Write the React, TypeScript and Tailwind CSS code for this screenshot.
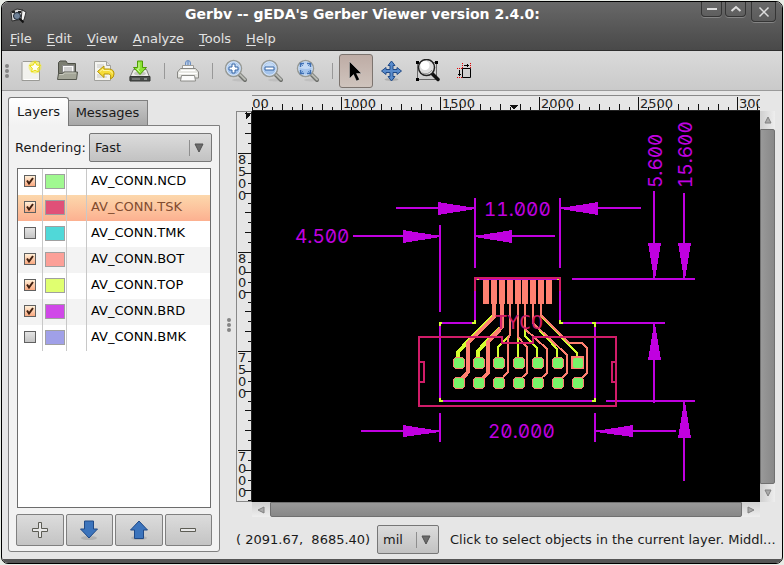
import { useState } from 'react';
import type { ReactNode } from 'react';

type Layer = { name: string; color: string; visible: boolean };

const initialLayers: Layer[] = [
  { name: 'AV_CONN.NCD', color: '#a0f890', visible: true },
  { name: 'AV_CONN.TSK', color: '#e05078', visible: true },
  { name: 'AV_CONN.TMK', color: '#50d8d8', visible: false },
  { name: 'AV_CONN.BOT', color: '#fca098', visible: true },
  { name: 'AV_CONN.TOP', color: '#e0ff70', visible: true },
  { name: 'AV_CONN.BRD', color: '#d048e8', visible: true },
  { name: 'AV_CONN.BMK', color: '#a0a0e8', visible: false },
];

const menus = ['File', 'Edit', 'View', 'Analyze', 'Tools', 'Help'];

function Icon({ children }: { children: ReactNode }) {
  return (
    <svg width="24" height="24" viewBox="0 0 24 24" fill="none" aria-hidden="true">
      {children}
    </svg>
  );
}

function NewIcon() {
  return (
    <Icon>
      <path d="M3 2.5h16.500v19h-17.500v-18z" fill="#f2f2ee" stroke="#9a9a96" />
      <path d="M4 20.500h14.500" stroke="#fff" />
      <circle cx="15" cy="8" r="6.500" fill="#f4ec30" opacity=".55" />
      <path d="M15 2.500l1.700 3.500 3.800.500-2.800 2.700.700 3.800-3.400-1.800-3.400 1.800.700-3.800-2.800-2.700 3.800-.500z" fill="#fffef0" stroke="#eadc10" />
    </Icon>
  );
}

function OpenIcon() {
  return (
    <Icon>
      <path d="M2.500 20V3.500L4 2h6l1.500 2.500h8V20z" fill="#7c7e72" stroke="#4c4e46" />
      <path d="M6.500 6.500h11.500v11h-11.500z" fill="#fafafa" stroke="#888" />
      <path d="M8 9h8M8 11h8M8 13h8" stroke="#a8a8a8" />
      <path d="M1.500 20.500L2.500 14.500h4l1-1.500h14l-1 7.500z" fill="#a4a698" stroke="#55574e" />
      <path d="M3.500 15.500h4l1-1.500h11.500" stroke="#c8cabe" />
    </Icon>
  );
}

function RevertIcon() {
  return (
    <Icon>
      <path d="M2.500 2.500h12l4 4v15h-16z" fill="#f4f4f0" stroke="#a0a09c" />
      <path d="M5 6h7M5 8h6M5 18h10M5 16h4" stroke="#c8c8c4" />
      <path d="M14.500 2.500v4h4" fill="#ddd" stroke="#a0a09c" />
      <path d="M5.500 12.500L12 7v3h5.500q4.500.500 4.500 5 0 3.500-3.500 5 1-5-2-5H12v3.500z" fill="#f6dc38" stroke="#b49408" />
      <path d="M8 12.500L11 10v1.500h6q3 .500 3.500 3" stroke="#fff59a" />
    </Icon>
  );
}

function SaveIcon() {
  return (
    <Icon>
      <path d="M5.500 10.500h13l3 7.500v3.500h-19.500V18z" fill="#ecece8" stroke="#7c7c78" />
      <path d="M2 17.500h20v4.500H2z" fill="#4c504e" stroke="#353735" />
      <path d="M4 20h8" stroke="#999" />
      <path d="M16 20h3" stroke="#ccc" />
      <ellipse cx="12" cy="14.500" rx="6" ry="2" fill="#c8c8c4" />
      <path d="M9.500 2h5v6.500h4L12 15.500 5.500 8.500h4z" fill="#8ae234" stroke="#4e9a06" />
      <path d="M11 3.500v6.500h-2l3 3.200" stroke="#d0f8a0" />
    </Icon>
  );
}

function PrintIcon() {
  return (
    <Icon>
      <path d="M9.500 8V4q0-2.500 2.500-2.500T14.500 4v4z" fill="#b8cce8" stroke="#6c8ec0" />
      <path d="M12 2v4" stroke="#5c82b8" />
      <path d="M6.500 11V6.500h11V11" fill="#f8f8f8" stroke="#9c9c98" />
      <path d="M1.500 19V13l3-3.500h15l3 3.500v6z" fill="#e8e8e4" stroke="#888884" />
      <path d="M5 11.500h14M3 14.500h18" stroke="#fff" />
      <path d="M5.500 16.500h13l1 5.500h-15z" fill="#fbfbfb" stroke="#8c8c88" />
    </Icon>
  );
}

function LensIcon({ children }: { children: ReactNode }) {
  return (
    <Icon>
      <ellipse cx="15" cy="21" rx="7" ry="1.500" fill="#aaa" opacity=".4" />
      <path d="M15.500 15.500l5.500 5.500" stroke="#6e706c" strokeWidth="4" strokeLinecap="round" />
      <path d="M16 15.500l5 5" stroke="#b8bab4" strokeWidth="2" strokeLinecap="round" />
      <circle cx="9.500" cy="9.500" r="8" fill="#a4c4ec" stroke="#989a94" strokeWidth="1.500" />
      <circle cx="9.500" cy="9.500" r="6.700" stroke="#dce8f8" />
      <path d="M4 9q1-5 5.500-5T15 9q-5 2-11 0z" fill="#c4daf4" />
      {children}
    </Icon>
  );
}

function ZoomInIcon() {
  return (
    <LensIcon>
      <path d="M8 5h3v3h3v3h-3v3H8v-3H5V8h3z" fill="#fff" stroke="#3465a4" />
    </LensIcon>
  );
}

function ZoomOutIcon() {
  return (
    <LensIcon>
      <path d="M5 8h9v3H5z" fill="#fff" stroke="#3465a4" />
    </LensIcon>
  );
}

function ZoomFitIcon() {
  return (
    <LensIcon>
      <path
        d="M4.500 8V4.500H8M11 4.500h3.500V8M14.500 11v3.500H11M8 14.500H4.500V11"
        stroke="#3f70b4"
        strokeWidth="1.500"
      />
      <path d="M5 5l2 2M14 5l-2 2M14 14l-2-2M5 14l2-2" stroke="#5a88c4" />
    </LensIcon>
  );
}

function PointerIcon() {
  return (
    <Icon>
      <path d="M5.500 2.500v17l4-4 3 6.500 3-1.500-3-6h5z" fill="#000" stroke="#fff" strokeOpacity=".35" />
    </Icon>
  );
}

function MoveIcon() {
  return (
    <Icon>
      <ellipse cx="11.500" cy="20.500" rx="7" ry="1.500" fill="#999" opacity=".6" />
      <path
        d="M11.500 2L15 6.500h-2v4h4v-2l4.500 3.500-4.500 3.500v-2h-4v4h2L11.500 22 8 17.500h2v-4H6v2L1.500 12 6 8.500v2h4v-4H8z"
        fill="#5a8ccc"
        stroke="#204a87"
      />
    </Icon>
  );
}

function ZoomAreaIcon() {
  return (
    <Icon>
      <path d="M1.500 3.500h19v17h-19z" stroke="#000" strokeDasharray="1 1" />
      <path d="M0 2h3v3H0zM19 2h3v3h-3zM0 19h3v3H0z" fill="#000" />
      <path d="M16 14.500l6 6" stroke="#111" strokeWidth="3.500" strokeLinecap="round" />
      <circle cx="10.500" cy="8.500" r="8" fill="#dedede" stroke="#222" strokeWidth="1.500" />
      <circle cx="9" cy="6.500" r="4.500" fill="#fff" />
      <path d="M6 14q6 2.500 10-3" stroke="#999" />
    </Icon>
  );
}

function MeasureIcon() {
  return (
    <Icon>
      <path d="M10.500 9.500h8v9h-8z" stroke="#000" />
      <path d="M10.500 4v5M18.500 4v5M5 9.500h5M5 18.500h5" stroke="#e00000" strokeDasharray="1 1" />
      <path d="M12 6.500h5M15.500 5v3M7.500 11v6M6 15.500h3" stroke="#000" />
    </Icon>
  );
}

function ToolButton({ label, active, children }: { label: string; active?: boolean; children: ReactNode }) {
  return (
    <button
      type="button"
      aria-label={label}
      aria-pressed={active}
      className={`mx-px flex h-[34px] w-[34px] items-center justify-center rounded-[3px] border ${
        active ? 'border-[#7c746f] bg-linear-to-b from-[#beaca5] to-[#cfc4bd]' : 'border-transparent'
      }`}
    >
      {children}
    </button>
  );
}

function ToolSeparator() {
  return (
    <div className="flex w-3 justify-center">
      <div className="h-4 w-px bg-[#989898]" />
    </div>
  );
}

function Grip() {
  return (
    <div className="flex flex-col gap-px">
      <span className="size-1 rounded-full bg-[#858585]" />
      <span className="size-1 rounded-full bg-[#858585]" />
      <span className="size-1 rounded-full bg-[#858585]" />
    </div>
  );
}

function TitleBar() {
  return (
    <header className="border-b border-[#2e2e2e] bg-linear-to-b from-[#686868] to-[#494949] text-[13px] text-[#e2e2e2]">
      <div className="flex h-[25px] items-start">
        <svg width="18" height="16" viewBox="0 0 18 16" className="mt-[6px] ml-2" aria-hidden="true">
          <path d="M1 4l6-3 6 1v9l-11 2z" fill="#d8d8d8" stroke="#2c2c2c" />
          <path d="M12 2l4 2-2 8-3 1z" fill="#f4f4f4" stroke="#333" />
          <path d="M2 3h3v2H2zM8 3h3v2H8z" fill="#222" />
          <circle cx="7" cy="8" r="3.500" fill="#6f8298" stroke="#1c2530" />
          <path d="M9.500 10.500l4 4" stroke="#111" strokeWidth="2" />
        </svg>
        <h1 className="flex-1 pt-1 pr-1 text-center text-[14px] leading-4 font-bold whitespace-nowrap text-white">
          Gerbv -- gEDA's Gerber Viewer version 2.4.0:
        </h1>
        <div className="mr-[6px] flex gap-[3px]">
          <button type="button" aria-label="Minimize" className="flex h-[15px] w-[21px] items-center justify-center rounded-b-[4px] border border-t-0 border-[#353535] shadow-[0_1px_0_#858585]">
            <svg width="12" height="12" viewBox="0 0 12 12" aria-hidden="true"><path d="M1 6h10" stroke="#ddd" strokeWidth="2" /></svg>
          </button>
          <button type="button" aria-label="Maximize" className="flex h-[15px] w-[21px] items-center justify-center rounded-b-[4px] border border-t-0 border-[#353535] shadow-[0_1px_0_#858585]">
            <svg width="12" height="12" viewBox="0 0 12 12" fill="none" aria-hidden="true"><path d="M1.500 8L6 4l4.500 4" stroke="#ddd" strokeWidth="2" /></svg>
          </button>
          <button type="button" aria-label="Close" className="ml-[2px] flex h-5 w-[25px] items-center justify-center rounded-b-[4px] border border-t-0 border-[#353535] shadow-[0_1px_0_#858585]">
            <svg width="12" height="12" viewBox="0 0 12 12" aria-hidden="true"><path d="M1.500 1.500l9 9M10.500 1.500l-9 9" stroke="#ddd" strokeWidth="1.500" /></svg>
          </button>
        </div>
      </div>
      <nav className="flex h-[23px] gap-[15px] pl-2">
        {menus.map((menu) => (
          <button key={menu} type="button" className="leading-5">
            <span className="underline underline-offset-2">{menu[0]}</span>
            {menu.slice(1)}
          </button>
        ))}
      </nav>
    </header>
  );
}

function Toolbar() {
  return (
    <div className="flex h-10 items-center border-b border-[#9a9a9a] bg-linear-to-b from-[#dadada] to-[#cacaca]">
      <div className="flex w-3 pl-[3px]">
        <Grip />
      </div>
      <ToolButton label="New"><NewIcon /></ToolButton>
      <ToolButton label="Open"><OpenIcon /></ToolButton>
      <ToolButton label="Revert"><RevertIcon /></ToolButton>
      <ToolButton label="Save"><SaveIcon /></ToolButton>
      <ToolSeparator />
      <ToolButton label="Print"><PrintIcon /></ToolButton>
      <ToolSeparator />
      <ToolButton label="Zoom in"><ZoomInIcon /></ToolButton>
      <ToolButton label="Zoom out"><ZoomOutIcon /></ToolButton>
      <ToolButton label="Zoom to fit"><ZoomFitIcon /></ToolButton>
      <ToolSeparator />
      <ToolButton label="Select" active><PointerIcon /></ToolButton>
      <ToolButton label="Pan"><MoveIcon /></ToolButton>
      <ToolButton label="Zoom area"><ZoomAreaIcon /></ToolButton>
      <ToolButton label="Measure"><MeasureIcon /></ToolButton>
    </div>
  );
}

function Combo({ id, label, options, className }: { id: string; label?: string; options: string[]; className: string }) {
  return (
    <div className={`relative h-[29px] ${className}`}>
      <select
        id={id}
        aria-label={label}
        className="h-full w-full appearance-none rounded-[2px] border border-[#777] bg-linear-to-b from-[#dcdcdc] to-[#c2c2c2] pl-[5px] text-[13px] text-[#1a1a1a]"
      >
        {options.map((option) => (
          <option key={option}>{option}</option>
        ))}
      </select>
      <div className="pointer-events-none absolute inset-y-0 right-2 flex items-center gap-1">
        <span className="h-4 w-px bg-[#8e8e8e]" />
        <svg width="10" height="10" viewBox="0 0 10 10" aria-hidden="true">
          <path d="M1 1h8L5 9z" fill="#6c6c6c" stroke="#505050" />
        </svg>
      </div>
    </div>
  );
}

function LayerRow({ layer, selected, striped, onToggle }: { layer: Layer; selected: boolean; striped: boolean; onToggle: () => void }) {
  const background = selected
    ? 'bg-linear-to-b from-[#fcd8ac] to-[#fcb090] text-[#804c30]'
    : striped
      ? 'bg-[#f3f3f3] text-black'
      : 'bg-white text-black';
  return (
    <li>
      <label className={`flex h-[26px] items-stretch ${background}`}>
        <span className="relative flex w-[25px] items-center justify-center border-r border-[#c8c8c8] pb-[2px]">
          <input
            type="checkbox"
            checked={layer.visible}
            onChange={onToggle}
            className="peer size-3 appearance-none border border-[#606060] bg-linear-to-b from-[#e4e4e4] to-[#c4c4c4] checked:from-[#fff0d8] checked:to-[#f8a880]"
          />
          <svg width="12" height="12" viewBox="0 0 12 12" fill="none" aria-hidden="true" className="pointer-events-none absolute hidden peer-checked:block">
            <path d="M3 5.500l2 3 4-5.500" stroke="#402010" strokeWidth="2" />
          </svg>
        </span>
        <span className="flex w-6 items-center justify-center border-r border-[#c8c8c8] pb-px">
          <span className="h-[15px] w-5 border border-[#a0a0a0]" style={{ backgroundColor: layer.color }} />
        </span>
        <span className="w-5 border-r border-[#c8c8c8]" />
        <span className="pl-1 text-[13px] leading-[23px]">{layer.name}</span>
      </label>
    </li>
  );
}

const listButton =
  'flex h-8 flex-1 items-center justify-center rounded-[2px] border border-[#808080] bg-linear-to-b from-[#dcdcdc] to-[#c4c4c4]';

function LayerPanel() {
  const [layers, setLayers] = useState(initialLayers);

  const toggle = (name: string) =>
    setLayers(layers.map((layer) => (layer.name === name ? { ...layer, visible: !layer.visible } : layer)));

  return (
    <aside className="mt-[2px] mb-[7px] ml-[6px] flex w-[212px] shrink-0 flex-col">
      <div role="tablist" className="flex items-end text-[13px]">
        <button type="button" role="tab" aria-selected="true" className="z-10 -mb-px h-[29px] w-[61px] rounded-t-[3px] border border-b-0 border-[#777] bg-linear-to-b from-white to-[#f2f2f2] pb-px">
          Layers
        </button>
        <button type="button" role="tab" aria-selected="false" className="h-[25px] w-[79px] border border-b-0 border-l-0 border-[#808080] bg-linear-to-b from-[#c8c8c8] to-[#a8a8a8] pr-px">
          Messages
        </button>
      </div>
      <div className="flex flex-1 flex-col rounded-b-[3px] border border-[#808080] bg-[#f2f2f2] px-[7px] pt-[7px] pb-[5px]">
        <div className="flex items-center justify-between text-[13px]">
          <label htmlFor="rendering" className="-ml-px">Rendering:</label>
          <Combo id="rendering" options={['Fast', 'Fast, with XOR', 'Normal', 'High quality']} className="w-[123px]" />
        </div>
        <ul className="mx-px mt-[6px] flex-1 border border-[#6c6c6c] bg-white">
          {layers.map((layer, index) => (
            <LayerRow
              key={layer.name}
              layer={layer}
              selected={index === 1}
              striped={index % 2 === 1}
              onToggle={() => toggle(layer.name)}
            />
          ))}
        </ul>
        <div className="mt-[6px] flex gap-[2px]">
          <button type="button" aria-label="Add layer" className={listButton}>
            <svg width="18" height="18" viewBox="0 0 18 18" aria-hidden="true"><path d="M7.500 1.500h3v6h6v3h-6v6h-3v-6h-6v-3h6z" fill="#e8e8e8" stroke="#5c5c54" /></svg>
          </button>
          <button type="button" aria-label="Move layer down" className={listButton}>
            <svg width="20" height="20" viewBox="0 0 20 20" aria-hidden="true"><ellipse cx="10" cy="18" rx="8" ry="2" fill="#999" opacity=".5" /><path d="M5.500 1h9v8h4L10 18 1.500 9h4z" fill="#3c74bc" stroke="#204a87" /></svg>
          </button>
          <button type="button" aria-label="Move layer up" className={listButton}>
            <svg width="20" height="20" viewBox="0 0 20 20" aria-hidden="true"><ellipse cx="10" cy="18" rx="8" ry="2" fill="#999" opacity=".5" /><path d="M5.500 18.500h9V10h4L10 1 1.500 10h4z" fill="#3c74bc" stroke="#204a87" /></svg>
          </button>
          <button type="button" aria-label="Remove layer" className={listButton}>
            <svg width="18" height="18" viewBox="0 0 18 18" aria-hidden="true"><path d="M1.500 7.500h15v3h-15z" fill="#e8e8e8" stroke="#5c5c54" /></svg>
          </button>
        </div>
      </div>
    </aside>
  );
}

// ruler scale: 99px per 500 mil, one tick every 50 mil
const STEP = 9.9;

function tickLength(index: number) {
  if (index % 10 === 0) return 13;
  return index % 2 === 0 ? 6 : 3;
}

function HorizontalRuler() {
  const ticks = Array.from({ length: 54 }, (_, i) => i);
  return (
    <div className="mr-[22px] ml-4 h-4 overflow-hidden border-t border-b border-t-[#888] border-b-[#222]">
      <svg width="524" height="14" viewBox="0 0 524 14" className="block" shapeRendering="crispEdges">
        {ticks.map((i) => {
          const x = Math.round(i * STEP - 9.6);
          return <path key={i} d={`M${x + 0.5} 14v-${tickLength(i)}`} stroke="#111" />;
        })}
        {[500, 1000, 1500, 2000, 2500, 3000].map((value, i) => (
          <text key={value} x={Math.round(i * 99 - 8)} y="12" fontSize="13" fill="#222">
            {value}
          </text>
        ))}
        <path d="M257 9h9l-4 5z" fill="#111" />
      </svg>
    </div>
  );
}

function VerticalRuler() {
  const ticks = Array.from({ length: 46 }, (_, i) => i);
  return (
    <div className="w-4 overflow-hidden border-t border-r border-b border-l border-[#888] border-r-[#222]">
      <svg width="14" height="454" viewBox="0 0 14 454" className="block" shapeRendering="crispEdges">
        {ticks.map((i) => {
          const y = Math.round(i * STEP - 58);
          return <path key={i} d={`M14 ${y + 0.5}h-${tickLength(i)}`} stroke="#111" />;
        })}
        {['8500', '8000', '7500', '7000'].map((value, row) =>
          value.split('').map((digit, i) => (
            <text key={`${value}-${i}`} x="1" y={52 + row * 99 + i * 12} fontSize="13" fill="#222">
              {digit}
            </text>
          )),
        )}
        <path d="M9 0v7l5-4z" fill="#111" />
      </svg>
    </div>
  );
}

const fingers = [483, 491, 499, 507, 515, 522, 530, 538, 546];
const padColumns = [459, 479, 499, 519, 538, 558, 578];

function Dimensions() {
  return (
    <g stroke="#c000e0" strokeWidth="2" fill="none">
      <path d="M475 198v70M560 198v70M440 225v87M440 413v29M595 413v29" />
      <path d="M572 279h123M563 323h102M606 401h89" />
      <path d="M396 208h79M561 208h80M353 236h87M475 236h80M361 431h79M595 431h81" />
      <path d="M654 191v88M684 193v86M654 323v80M684 402v79" />
      <g fill="#c000e0" stroke="none">
        <path d="M438 202v13l37-6v-1zM598 202v13l-37-6v-1zM403 230v13l37-6v-1zM512 230v13l-37-6v-1z" />
        <path d="M403 425v12l37-5v-1zM633 425v12l-37-5v-1z" />
        <path d="M648 243h13l-6 36h-1zM678 243h13l-6 36h-1zM648 360h13l-6-36h-1zM678 438h13l-6-36h-1z" />
      </g>
      <g fill="#c000e0" stroke="none" fontSize="19" className="font-['Inter',sans-serif] [font-feature-settings:'zero','tnum']">
        <text x="484" y="216">11.000</text>
        <text x="295" y="243">4.500</text>
        <text x="488" y="438">20.000</text>
        <text transform="translate(662 188) rotate(-90)">5.600</text>
        <text transform="translate(692 188) rotate(-90)">15.600</text>
      </g>
    </g>
  );
}

function Board() {
  return (
    <svg width="508" height="391" viewBox="252 111 508 391" className="block" shapeRendering="crispEdges" fill="none">
      <Dimensions />
      <path d="M475 279h85v44h35v78h-155v-78h35z" stroke="#c000e0" strokeWidth="2" />
      <g stroke="#d4ff30" strokeWidth="2">
        <path d="M440 326v-3h2M472 323h3v-3M560 320v3h3M592 323h3v4M440 398v3h3M592 401h3v-3M477 279h2M557 279h2" />
        <path d="M458 358v-6l36-37M478 358v-7l22-23" strokeWidth="4" />
        <path d="M498 358v-11l12-12M518 358v-20M525 328v8l12 12v10M533 323l24 26v9M541 316l36 37v5" />
      </g>
      <g stroke="#ff8070">
        <path d="M494 304v13l-26 26v29l-10 11M502 304v23l-14 15v31l-10 10" strokeWidth="4" />
        <path
          d="M510 304v31l-2 3v34l-9 10M518 304v33l9 10v26l-9 8M525 304v25l22 20v24l-9 8M533 304v19l34 32v18l-9 9M541 304v11l28 28h13l5 5v25l-9 9"
          strokeWidth="2"
        />
      </g>
      <g fill="#ff8070">
        {fingers.map((x) => (
          <rect key={x} x={x} y="280" width="6" height="24" />
        ))}
      </g>
      {padColumns.map((x, column) =>
        [363, 383].map((y) => (
          <g key={`${x}-${y}`}>
            {column === 6 && y === 363 ? (
              <rect x={x - 7} y={y - 7} width="13" height="13" fill="#ff8070" />
            ) : (
              <rect x={x - 6} y={y - 6} width="12" height="12" rx="4" fill="#ff8070" />
            )}
            <rect x={x - 5} y={y - 5} width="10" height="10" rx="3" fill="#78f468" />
          </g>
        )),
      )}
      <g stroke="#d01c68" strokeWidth="2">
        <path d="M475 291v-13h85v13" />
        <path d="M419 337h83v6h31v-6h83v69h-197zM419 362h5v20h-5M616 362h-4v20h4" />
        <text x="495" y="329" fontSize="20" fill="#d01c68" stroke="none" className="font-['DejaVu_Sans_Mono',monospace]">
          TYCO
        </text>
      </g>
    </svg>
  );
}

function ScrollArrow({ label, path, className }: { label: string; path: string; className: string }) {
  return (
    <button type="button" aria-label={label} className={`flex items-center justify-center from-[#cfcfcf] to-[#eee] ${className}`}>
      <svg width="8" height="8" viewBox="0 0 8 8" aria-hidden="true">
        <path d={path} fill="#aaa" stroke="#808080" />
      </svg>
    </button>
  );
}

function Viewer() {
  return (
    <main className="flex min-w-0 flex-1 flex-col">
      <HorizontalRuler />
      <div className="flex min-h-0 flex-1 pr-[7px]">
        <VerticalRuler />
        <div className="min-w-0 flex-1 overflow-hidden bg-black">
          <Board />
        </div>
        <div className="flex w-[15px] flex-col">
          <ScrollArrow label="Scroll up" path="M1 7l3-6 3 6z" className="h-[18px] w-full bg-linear-to-r" />
          <div className="flex-1 rounded-r-[2px] border border-[#707070] bg-linear-to-r from-[#999] to-[#888]" />
          <ScrollArrow label="Scroll down" path="M1 1l3 6 3-6z" className="h-[18px] w-full bg-linear-to-r" />
        </div>
      </div>
      <div className="mr-[22px] ml-4 flex h-[15px]">
        <ScrollArrow label="Scroll left" path="M7 1l-6 3 6 3z" className="h-full w-[18px] bg-linear-to-b" />
        <div className="flex-1 rounded-b-[2px] border border-[#707070] bg-linear-to-b from-[#999] to-[#888]" />
        <ScrollArrow label="Scroll right" path="M1 1l6 3-6 3z" className="h-full w-[18px] bg-linear-to-b" />
      </div>
      <footer className="mt-2 mb-[5px] flex items-center pr-1 text-[13px] whitespace-nowrap">
        <span className="w-[141px] shrink-0">( 2091.67,&nbsp; 8685.40)</span>
        <Combo id="units" label="Units" options={['mil', 'mm', 'in']} className="w-[62px] shrink-0" />
        <span className="ml-[11px] min-w-0 overflow-hidden">Click to select objects in the current layer. Middl...</span>
      </footer>
    </main>
  );
}

export default function App() {
  return (
    <div className="flex h-screen bg-[#e8ece6] p-px font-['DejaVu_Sans',sans-serif] text-[#1a1a1a]">
      <div className="flex min-w-0 flex-1 flex-col overflow-hidden rounded-[7px] border border-black bg-[#e6e6e6]">
        <TitleBar />
        <Toolbar />
        <div className="flex min-h-0 flex-1 pt-1">
          <LayerPanel />
          <div className="flex w-4 shrink-0 items-center justify-center pb-1 pl-[2px]">
            <Grip />
          </div>
          <Viewer />
        </div>
        <div className="h-1 bg-[#555]" />
      </div>
    </div>
  );
}
